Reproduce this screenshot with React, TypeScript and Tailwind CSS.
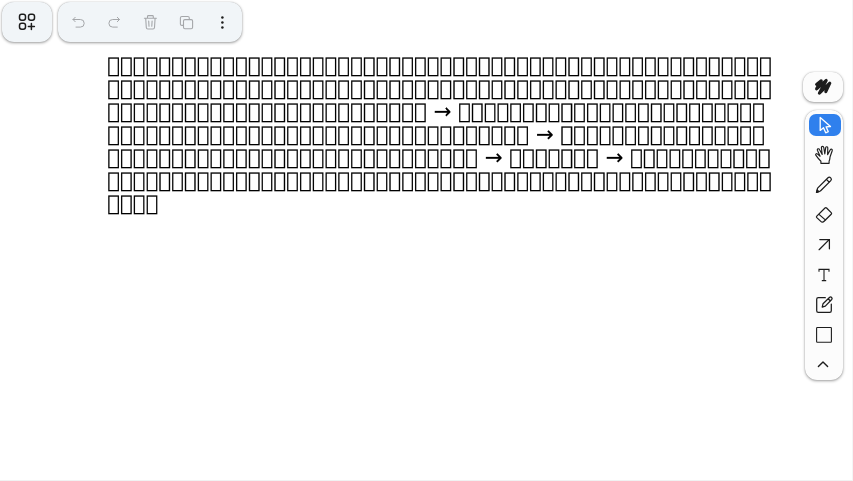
import type { ReactNode } from 'react';

const UNKNOWN = '\uF8F0';
const run = (n: number) => UNKNOWN.repeat(n);

const lines: string[] = [
  run(52),
  run(52),
  `${run(25)} → ${run(24)}`,
  `${run(33)} → ${run(16)}`,
  `${run(29)} → ${run(7)} → ${run(11)}`,
  run(52),
  run(4),
];

function Icon({ children, width = 1.25, size = 20 }: { children: ReactNode; width?: number; size?: number }) {
  return (
    <svg width={size} height={size} viewBox={`0 0 ${size} ${size}`} fill="none" stroke="currentColor" strokeWidth={width} strokeLinecap="round" strokeLinejoin="round">
      {children}
    </svg>
  );
}

const tools: { name: string; icon: ReactNode }[] = [
  {
    name: 'Select',
    icon: <Icon width={1.3}><path d="M5.2 2.4v13l3.3-2.7 2.2 5.1 2.6-1.1-2.2-4.9 4.4-.3z" /></Icon>,
  },
  {
    name: 'Hand',
    icon: <Icon width={1.15}><path d="M6 18.3v-2.1C4.4 14.8 2.2 12 .9 10.1c-.6-1 .8-1.9 1.8-1l2.5 2.1L2.5 5.3c-.5-1.5 1.5-2.2 2.2-.6l2.6 4.8-.8-6.9c0-1.5 2.1-1.6 2.4 0l1 6.4.9-6.3c.2-1.5 2.2-1.2 2.1.3l-.2 6.6 2.7-4.9c.8-1.2 2.5-.3 1.9 1l-2.1 6c-.3 1.6-.2 3.1-1 4.3v2.3z" transform="translate(.9)" /></Icon>,
  },
  {
    name: 'Draw',
    icon: <Icon><path d="m2.5 17.4 1.1-4.3L14 2.8c.8-.8 2-.6 2.7.1s.9 1.9.1 2.7L6.4 16zM12.4 4.4l2.9 2.9" /><path d="m2.5 17.4.7-2.4 1.7 1.7z" fill="currentColor" /></Icon>,
  },
  {
    name: 'Eraser',
    icon: <Icon><path d="m2.8 11.1 8.2-8.1c.5-.5 1.1-.5 1.6 0l4.6 4.6c.5.5.5 1.1 0 1.6l-7.1 7.1c-1 1-2.3 1.1-3.3.1l-4-3.8c-.5-.5-.5-1 0-1.5zM4.7 9.1l6.9 6" /></Icon>,
  },
  { name: 'Arrow', icon: <Icon><path d="M5.1 14.7 15.2 4.6M5.8 4.5h9.6v9.3" strokeLinejoin="miter" /></Icon> },
  {
    name: 'Text',
    icon: <Icon width={1.1}><path d="M5 6.8V4.4h10v2.4M10 4.4v11.2M7.8 15.6h4.4" strokeLinecap="butt" strokeLinejoin="miter" /></Icon>,
  },
  {
    name: 'Note',
    icon: <Icon><path d="M11.3 2.7H4.3c-1 0-1.6.6-1.6 1.6v11.4c0 1 .6 1.6 1.6 1.6h11.4c1 0 1.6-.6 1.6-1.6V9" /><path d="m8.2 12.1.8-3.3 6.7-6.5c1.3-1.1 3.2.8 2 2.2l-6.4 6.6zM14.2 3.8l2.2 2.2" /></Icon>,
  },
  { name: 'Rectangle', icon: <Icon width={1.1}><rect x="2.6" y="2.5" width="14.8" height="14.8" rx=".7" /></Icon> },
  { name: 'More', icon: <Icon width={1.4}><path d="m4.4 11.5 4.6-4.6 4.6 4.6" /></Icon> },
];

const shadow = 'shadow-[0_1px_3px_rgba(0,0,0,0.38),0_0_1px_rgba(0,0,0,0.25)]';

export default function App() {
  return (
    <div className="flex h-[481px] w-[853px] justify-between overflow-hidden border-b border-[#f0f2f2] bg-white font-['Inter',sans-serif] text-[#1d1d1d]">
      <div className="flex w-[790px] flex-col">
        <header className="flex h-[42px] gap-1.5 pl-0.5 pt-0.5">
          <button aria-label="Add widget" className={`flex h-10 w-[50px] items-center justify-center rounded-[12px] bg-[#f1f5f8] ${shadow}`}>
            <Icon width={1.5}>
              <rect x="2.5" y="2.3" width="6" height="6" rx="2.2" />
              <rect x="11.5" y="2.3" width="6" height="6" rx="2.2" />
              <rect x="2.5" y="11.3" width="6" height="6" rx="2.2" />
              <path d="M14.4 11.6v6M11.4 14.6h6" />
            </Icon>
          </button>
          <div className={`flex h-10 w-[184px] items-center gap-4 rounded-[12px] bg-[#f1f5f8] pl-2.5 text-[#a5a7aa] ${shadow}`}>
            <button aria-label="Undo">
              <Icon width={1}><path d="M7.2 5.3 5 7.5l2.2 2.2M5.1 7.5h7.3a3.8 3.8 0 0 1 0 7.6H8" /></Icon>
            </button>
            <button aria-label="Redo">
              <Icon width={1}><path d="m13.3 5.3 2.2 2.2-2.2 2.2M15.4 7.5H8.7a3.8 3.8 0 0 0 0 7.6h4.6" /></Icon>
            </button>
            <button aria-label="Delete">
              <Icon width={1.1}><path d="M4.4 6.2h12M7.5 6V4.5c0-.6.3-.9.9-.9h4c.6 0 .9.3.9.9V6M5.7 6.3l.6 9.2c.1 1 .6 1.5 1.5 1.5H13c.9 0 1.4-.5 1.5-1.5l.6-9.2M8.7 9l.3 5.3M12.1 9l-.3 5.3" /></Icon>
            </button>
            <button aria-label="Duplicate">
              <Icon width={1.1}><rect x="7.5" y="7.6" width="9.1" height="9.1" rx="1.4" /><path d="M7.2 13.4H5.9c-1 0-1.5-.5-1.5-1.5V6c0-1 .5-1.5 1.5-1.5h5.9c1 0 1.5.5 1.5 1.5v1.3" /></Icon>
            </button>
            <button aria-label="More actions" className="text-[#1d1d1d]">
              <Icon width={0}><circle cx="10.4" cy="5.4" r="1.25" fill="currentColor" /><circle cx="10.4" cy="10.4" r="1.25" fill="currentColor" /><circle cx="10.4" cy="15.4" r="1.25" fill="currentColor" /></Icon>
            </button>
          </div>
        </header>
        <main className="origin-top-left scale-[0.5] pl-[214.5px] pt-[23px] font-['DejaVu_Sans',sans-serif] text-[42.6px] leading-[46px] text-black will-change-transform [-webkit-text-stroke:0.25px_black]">
          {lines.map((line, i) => (
            <p key={i} className="whitespace-pre">{line}</p>
          ))}
        </main>
      </div>
      <aside className="flex w-[51px] flex-col items-start gap-2 border-r border-[#f4f5f5] pt-[72px]">
        <button aria-label="Pen style" className={`ml-px flex h-[30px] w-10 items-center justify-center rounded-[11px] bg-[#fcfcfc] ${shadow}`}>
          <Icon width={3.1}><path d="M3.6 7.4 8.2 3.8 3.6 11.8 13.2 3.4 6.4 16.2 16.8 6.2 12.8 14.6" /></Icon>
        </button>
        <div className={`ml-[3px] flex h-[270px] w-[38px] shrink-0 flex-col items-center rounded-[12px] bg-[#fcfcfc] ${shadow}`}>
          {tools.map((tool, i) => (
            <button key={tool.name} aria-label={tool.name} className="flex h-[30px] w-full items-center justify-center">
              <span className={`flex h-[22px] w-8 items-center justify-center rounded-[7px] ${i === 0 ? 'ml-0.5 bg-[#2f80ed] text-white' : ''}`}>{tool.icon}</span>
            </button>
          ))}
        </div>
      </aside>
    </div>
  );
}
